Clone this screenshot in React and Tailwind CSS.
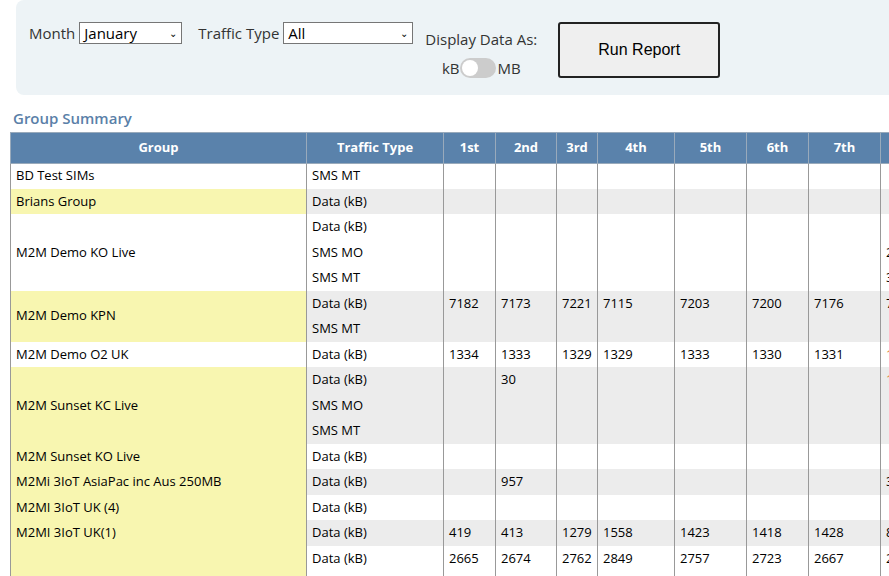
const rows = [
  { g: 'BD Test SIMs', span: 1, y: false, bg: 'bg-white', items: [['SMS MT', []]] },
  { g: 'Brians Group', span: 1, y: true, bg: 'bg-[#ececec]', items: [['Data (kB)', []]] },
  { g: 'M2M Demo KO Live', span: 3, y: false, bg: 'bg-white', items: [['Data (kB)', []], ['SMS MO', ['', '', '', '', '', '', '', '2']], ['SMS MT', ['', '', '', '', '', '', '', '3']]] },
  { g: 'M2M Demo KPN', span: 2, y: true, bg: 'bg-[#ececec]', items: [['Data (kB)', ['7182', '7173', '7221', '7115', '7203', '7200', '7176', '7190']], ['SMS MT', []]] },
  { g: 'M2M Demo O2 UK', span: 1, y: false, bg: 'bg-white', items: [['Data (kB)', ['1334', '1333', '1329', '1329', '1333', '1330', '1331', '1332']]], o: true },
  { g: 'M2M Sunset KC Live', span: 3, y: true, bg: 'bg-[#ececec]', items: [['Data (kB)', ['', '30', '', '', '', '', '', '1']], ['SMS MO', []], ['SMS MT', []]], o: true },
  { g: 'M2M Sunset KO Live', span: 1, y: true, bg: 'bg-white', items: [['Data (kB)', []]] },
  { g: 'M2Mi 3IoT AsiaPac inc Aus 250MB', span: 1, y: true, bg: 'bg-[#ececec]', items: [['Data (kB)', ['', '957', '', '', '', '', '', '3']]] },
  { g: 'M2MI 3IoT UK (4)', span: 1, y: true, bg: 'bg-white', items: [['Data (kB)', []]] },
  { g: 'M2MI 3IoT UK(1)', span: 1, y: true, bg: 'bg-[#ececec]', items: [['Data (kB)', ['419', '413', '1279', '1558', '1423', '1418', '1428', '812']]] },
  { g: 'M2MI 3IoT UK(2)', span: 3, y: true, bg: 'bg-white', items: [['Data (kB)', ['2665', '2674', '2762', '2849', '2757', '2723', '2667', '2701']], ['SMS MO', []], ['SMS MT', []]] },
]

const days = ['1st', '2nd', '3rd', '4th', '5th', '6th', '7th', '8th']
const widths = ['w-[52px]', 'w-[61px]', 'w-[41px]', 'w-[77px]', 'w-[72px]', 'w-[62px]', 'w-[72px]', 'w-[72px]']

export default function App() {
  return (
    <div className="h-[576px] w-[889px] overflow-hidden bg-white text-[13px] text-black" style={{ fontFamily: '"Open Sans", sans-serif' }}>
      <div className="ml-4 flex h-[95px] items-start gap-3 rounded-bl-lg rounded-tl-lg bg-[#edf3f6] pl-[13px] pt-[22px]">
        <div className="flex items-center gap-1 text-[15px] text-[#333]">
          <span>Month</span>
          <div className="flex h-[22px] w-[103px] items-center justify-between border border-[#767676] bg-white px-1 text-[15px] text-black">January<span className="text-[10px]">&#8964;</span></div>
        </div>
        <div className="ml-1 flex items-center gap-1 text-[15px] text-[#333]">
          <span>Traffic Type</span>
          <div className="flex h-[22px] w-[130px] items-center justify-between border border-[#767676] bg-white px-1 text-[15px] text-black">All<span className="text-[10px]">&#8964;</span></div>
        </div>
        <div className="flex flex-col items-center pt-[6px] text-[15px] text-[#333]">
          <span>Display Data As:</span>
          <div className="mt-[6px] flex items-center">
            <span>kB</span>
            <span className="relative mx-[1px] h-[20px] w-[36px] rounded-full bg-[#cccccc]">
              <span className="absolute left-[2px] top-[2px] h-[16px] w-[16px] rounded-full bg-white" />
            </span>
            <span>MB</span>
          </div>
        </div>
        <button className="ml-[9px] h-[56px] w-[162px] rounded-[3px] border-2 border-[#222] bg-[#efefef] text-[16px]" style={{ fontFamily: '"Liberation Sans", sans-serif' }}>Run Report</button>
      </div>
      <div className="ml-[13px] mt-[12px] text-[15px] font-semibold text-[#5a80a8]">Group Summary</div>
      <table className="ml-[10px] mt-[2px] w-[942px] min-w-[942px] border-collapse" style={{ tableLayout: 'fixed' }}>
        <thead>
          <tr className="h-[31px] bg-[#5a82ab] text-white">
            <th className="w-[296px] border border-[#9ab] font-bold">Group</th>
            <th className="w-[137px] border border-[#9ab] font-bold">Traffic Type</th>
            {days.map((d, i) => (
              <th key={d} className={`${widths[i]} border border-[#9ab] font-bold`}>{d}</th>
            ))}
          </tr>
        </thead>
        <tbody>
          {rows.map((r) =>
            r.items.map(([t, vals], j) => (
              <tr key={r.g + j} className={`h-[25.5px] ${r.bg}`}>
                {j === 0 && (
                  <td rowSpan={r.span} className={`border-x border-[#999] px-[5px] ${r.y ? 'bg-[#f8f6b0]' : 'bg-white'}`}>{r.g}</td>
                )}
                <td className="border-x border-[#999] px-[5px]">{t}</td>
                {days.map((d, k) => (
                  <td key={d} className={`border-x border-[#999] px-[5px] ${k === 7 && r.o ? 'text-[#d9822b]' : ''}`}>{vals[k] || ''}</td>
                ))}
              </tr>
            ))
          )}
        </tbody>
      </table>
    </div>
  )
}
